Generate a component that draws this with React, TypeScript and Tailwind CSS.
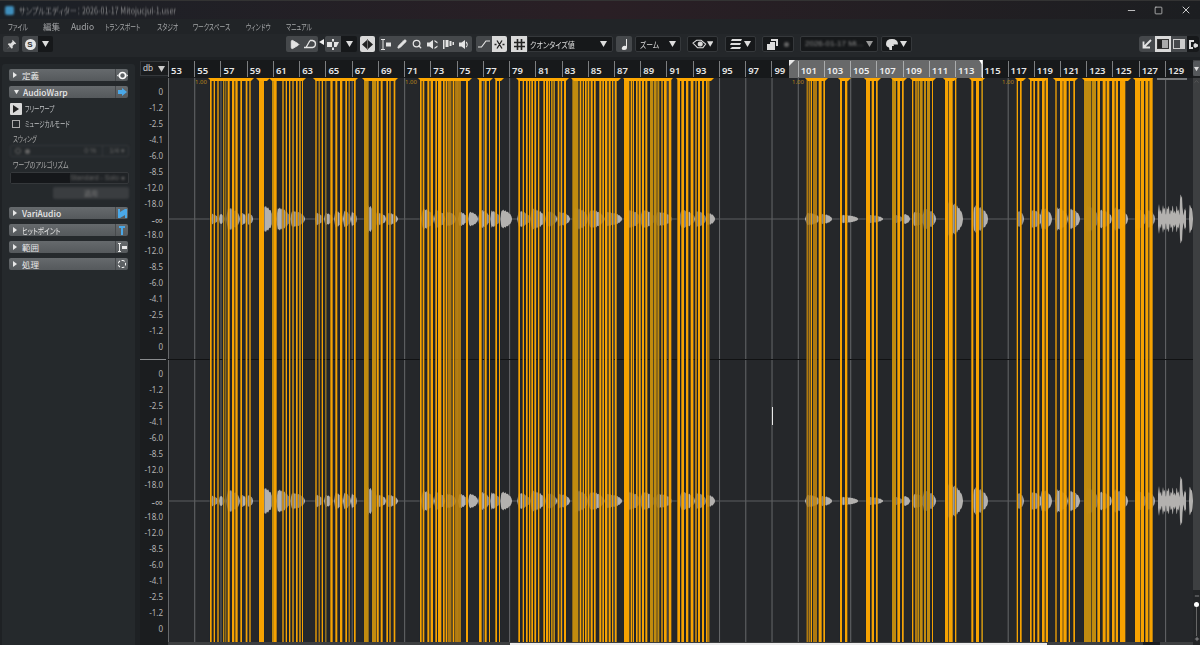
import type { ReactNode } from "react";
import { Minus, Plus, X, Square, Pencil, Search, Play, ChevronUp } from "lucide-react";

const JP = "font-['Noto_Sans_CJK_JP','Noto_Sans',sans-serif]";
// the kana in the shot are set much narrower than Noto's
const NARROW = "inline-block origin-left scale-x-[.68] whitespace-nowrap";

// [start, end, dim] as read off the 3x crops
const scan = (x0: number, list: number[][]) =>
  list.map(([a, b, d]) => ({ x: x0 + a / 3, w: (b - a) / 3, dim: !!d }));

const bars = [
  ...scan(190, [
    [60, 65], [71, 75], [82, 86], [99, 103, 1], [106, 109, 1], [113, 119], [126, 133], [136, 143], [151, 156], [167, 172], [178, 182],
    [207, 222], [246, 252, 1], [252, 260], [277, 281], [287, 291], [297, 301], [307, 311], [318, 323], [328, 332], [336, 339],
    [376, 380], [386, 389], [395, 399], [406, 409, 1], [421, 428], [436, 442], [450, 457], [466, 471], [476, 479], [492, 497],
    [522, 536, 1], [546, 558, 1], [560, 566], [572, 578], [589, 594], [598, 602], [611, 616], [690, 695], [698, 703], [712, 718], [722, 729], [736, 741], [744, 750],
  ]),
  ...scan(440, [
    [0, 4], [9, 14], [17, 22], [25, 29], [31, 34], [38, 43], [46, 50], [52, 56], [58, 62], [78, 84],
    [117, 125], [134, 140], [147, 150], [166, 171], [177, 180],
    [235, 240], [248, 252], [258, 263], [267, 271], [274, 279], [283, 288], [294, 298],
    [310, 315], [318, 324], [326, 330], [333, 338, 1], [340, 345, 1], [353, 358], [362, 366], [372, 378],
    [397, 415, 1], [419, 424], [428, 432], [435, 440], [443, 448], [452, 458], [462, 467], [478, 484], [487, 492], [495, 502], [506, 512], [516, 520], [525, 530],
    [552, 568], [572, 577], [579, 582], [588, 593], [596, 602], [606, 612], [616, 622], [630, 640, 1], [642, 650, 1], [652, 658, 1], [664, 668], [672, 680], [686, 694],
    [712, 720], [724, 732], [738, 745], [752, 760], [766, 770], [774, 780], [786, 792], [798, 803], [805, 808],
  ]),
  ...scan(790, [
    [50, 53], [56, 59], [62, 66], [70, 74], [76, 80], [86, 95], [100, 105],
    [150, 156], [165, 172], [228, 240], [245, 252], [258, 263],
    [306, 318, 1], [322, 330], [336, 341], [366, 370], [376, 380], [382, 387, 1], [389, 398, 1], [402, 408, 1], [411, 420, 1], [426, 429],
    [465, 475], [477, 488], [495, 499], [544, 550], [558, 567], [574, 579, 1],
    [680, 684], [690, 695], [720, 725], [730, 735], [742, 748], [756, 764], [767, 774],
    [796, 800], [810, 818], [820, 830], [836, 840], [850, 855],
    [882, 904, 1], [906, 918, 1], [922, 930], [938, 947], [950, 958], [966, 974], [977, 984], [990, 1006],
    [1035, 1050], [1052, 1062], [1066, 1075], [1078, 1088],
  ]),
];

const caps = [
  [208, 254], [256, 270], [269, 306], [313, 358], [362, 398], [418, 472], [477, 493], [494, 504], [516, 569], [571, 621], [623, 673], [676, 714],
  [805, 828], [838, 851], [864, 881], [891, 907], [910, 936], [943, 957], [969, 985], [1015, 1026], [1028, 1048], [1053, 1078], [1082, 1131], [1133, 1153],
];

// start, end, amplitude, noise
const notes = [
  [211, 218, 5], [219, 225, 5], [226, 240, 11], [240, 247, 6], [247, 253, 6], [262, 273, 13], [276, 290, 11], [290, 305, 8],
  [315, 323, 6], [324, 333, 6], [334, 343, 8], [343, 351, 8], [351, 357, 7], [366, 378, 13], [378, 386, 6], [386, 398, 6],
  [421, 434, 10], [434, 445, 9], [446, 456, 7], [458, 467, 7], [468, 478, 7], [478, 490, 9], [490, 500, 8], [500, 512, 9],
  [517, 530, 8], [530, 545, 10], [545, 557, 8], [557, 570, 7], [573, 588, 11], [588, 604, 9], [604, 622, 7],
  [627, 640, 9], [640, 655, 9], [655, 672, 7], [679, 695, 9], [695, 706, 8], [706, 715, 6],
  [805, 820, 6], [820, 832, 5], [840, 858, 4], [866, 883, 4], [892, 903, 4], [903, 910, 5],
  [912, 925, 7], [922, 936, 10], [945, 963, 17], [972, 988, 13], [1017, 1024, 8],
  [1030, 1042, 9], [1040, 1052, 11], [1055, 1068, 11], [1068, 1080, 10], [1085, 1098, 13], [1098, 1112, 9], [1112, 1128, 11], [1135, 1146, 10], [1146, 1155, 9],
  [1158, 1170, 15, 1], [1170, 1186, 14, 1], [1189, 1193, 14],
];

function blobPath(s: number, e: number, amp: number, noisy: number, cy: number) {
  const up: string[] = [];
  const down: string[] = [];
  for (let x = s; x <= e; x += 0.5) {
    const t = (x - s) / (e - s);
    const shape = Math.min(1, t / 0.14) * Math.sqrt(Math.max(0, 1 - t * t));
    const jitter = noisy ? 0.62 + 0.38 * Math.sin(x * 2.3) * Math.cos(x * 0.9) + (Math.abs(x - 1181) < 1.2 ? 0.9 : 0) : 1 + 0.08 * Math.sin(x * 2.7);
    const a = Math.max(0.6, amp * (noisy ? jitter : shape * jitter));
    up.push(`${x},${cy - a}`);
    down.unshift(`${x},${cy + a}`);
  }
  return `M${up.join("L")}L${down.join("L")}Z`;
}

const dbLabels = ["0", "-1.2", "-2.5", "-4.1", "-6.0", "-8.5", "-12.0", "-18.0", "-∞", "-18.0", "-12.0", "-8.5", "-6.0", "-4.1", "-2.5", "-1.2", "0"];
const ticks = Array.from({ length: 39 }, (_, i) => 53 + i * 2);

function Caret({ className = "" }: { className?: string }) {
  return (
    <svg width="7" height="6" viewBox="0 0 7 6" className={className}>
      <path d="M0 0h7L3.5 6z" fill="currentColor" />
    </svg>
  );
}

function Gray({ w, children, active }: { w: string; children?: ReactNode; active?: boolean }) {
  return <div className={`${w} h-4 flex items-center justify-center shrink-0 ${active ? "bg-[#d9d9d9] text-[#222]" : "bg-[#45484b] text-[#e4e4e4]"}`}>{children}</div>;
}

function Dark({ w, children }: { w: string; children?: ReactNode }) {
  return <div className={`${w} h-4 flex items-center justify-between px-[4px] shrink-0 bg-[#16181a] border border-[#35383b] rounded-[2px] text-[#ddd]`}>{children}</div>;
}

function SpeakerIcon({ cut }: { cut?: boolean }) {
  return (
    <svg width="11" height="11" viewBox="0 0 11 11" fill="currentColor">
      <path d="M0 3.5h2.5L6 1v9L2.5 7.5H0z" />
      {cut ? <path d="M7.5 2.5l3 2V3l-3-2zM7.5 8.5l3-2V8l-3 2z" /> : <path d="M7.5 2.5q2.5 3 0 6l-.7-.7q1.8-2.3 0-4.6z" />}
    </svg>
  );
}

function Toolbar() {
  return (
    <div className="h-[23px] bg-[#24272a] flex items-start pt-[2px] pl-[3px] shrink-0">
      <div className="w-4 h-4 bg-[#3d4043] rounded-[2px] flex items-center justify-center text-[#ddd]">
        <svg width="11" height="11" viewBox="0 0 11 11" fill="currentColor"><path d="M6.5.8l3.7 3.7-1 .7-.7-.2-1.9 1.900.2 1.800-1 1-2-2L.8 10.200l3-3-2-2 1-1 1.800.2 1.900-1.900-.2-.7z" /></svg>
      </div>
      <div className="ml-[3px] flex rounded-[2px] overflow-hidden">
        <Gray w="w-4">
          <div className="w-[11px] h-[11px] rounded-full bg-[#e4e4e4] text-[#333] text-[8px] leading-[11px] font-bold text-center font-['Liberation_Sans',sans-serif]">S</div>
        </Gray>
        <div className="w-[15px] h-4 bg-[#16181a] text-[#ddd] flex items-center justify-center"><Caret /></div>
      </div>
      <div className="ml-[233px] flex rounded-[2px] overflow-hidden">
        <Gray w="w-4"><Play size={11} fill="currentColor" /></Gray>
        <Gray w="w-4">
          <svg width="14" height="10" viewBox="0 0 14 10" fill="none" stroke="currentColor" strokeWidth="1.3"><path d="M1 8.5h8.500q3-.5 3-3.500t-3-3.500H7M7 1.500L3 8.500" /></svg>
        </Gray>
      </div>
      <svg width="5" height="6" viewBox="0 0 5 6" className="ml-[1px] mt-[3px] text-[#eee]"><path d="M5 0v6L0 3z" fill="currentColor" /></svg>
      <div className="ml-[1px] flex rounded-[2px] overflow-hidden">
        <Gray w="w-4">
          <svg width="12" height="11" viewBox="0 0 12 11" fill="currentColor"><path d="M5 0h2v2.500H5zM0 3h5v5H0zM7 3h5L9.500 8H7zM5 8.500h2V11H5z" /></svg>
        </Gray>
        <div className="w-4 h-4 bg-[#16181a] text-[#ddd] flex items-center justify-center"><Caret /></div>
      </div>
      <div className="ml-[3px] rounded-[2px] overflow-hidden">
        <Gray w="w-[15px]" active>
          <svg width="11" height="11" viewBox="0 0 11 11" fill="currentColor"><path d="M5 1v9L0 5.500zM6 1l5 4.500L6 10zM5.200 0h.6v11h-.6z" /></svg>
        </Gray>
      </div>
      <div className="ml-[4px] w-[93px] h-4 bg-[#45484b] rounded-[2px] flex items-center justify-between px-[2px] text-[#e4e4e4]">
        <svg width="11" height="11" viewBox="0 0 11 11" fill="currentColor"><path d="M0 0h4v1H2.500v9H4v1H0v-1h1.500V1H0zM5 3.500h5v4H5z" /></svg>
        <Pencil size={10} fill="currentColor" />
        <Search size={10} strokeWidth={3} />
        <SpeakerIcon cut />
        <svg width="11" height="11" viewBox="0 0 11 11" fill="currentColor"><path d="M0 1h1.500v9H0zM2.500 1h3v7h-3zM6.500 2h2v5h-2zM9.500 3H11v3H9.500z" /></svg>
        <SpeakerIcon />
      </div>
      <div className="ml-[4px] flex rounded-[2px] overflow-hidden">
        <Gray w="w-4">
          <svg width="12" height="10" viewBox="0 0 12 10" fill="none" stroke="currentColor" strokeWidth="1.2"><path d="M0 8h3.500L8 2h4" /></svg>
        </Gray>
        <Gray w="w-[15px]" active>
          <svg width="11" height="11" viewBox="0 0 11 11" fill="none" stroke="currentColor" strokeWidth="1.3"><path d="M3 1.500l5 8M8 1.500l-5 8M.5 5.500h2M8.500 5.500h2" /></svg>
        </Gray>
      </div>
      <div className="ml-[4px] flex w-[102px]">
        <Gray w="w-4" active>
          <svg width="11" height="11" viewBox="0 0 11 11" fill="none" stroke="currentColor" strokeWidth="1.6"><path d="M3.500 0v11M7.500 0v11M0 3.500h11M0 7.500h11" /></svg>
        </Gray>
        <div className="flex-1 h-4 bg-[#16181a] border border-[#35383b] rounded-r-[2px] flex items-center justify-between pl-[2px] pr-[5px] text-[#ddd]">
          <span className="text-[8.5px] leading-none inline-block origin-left scale-x-[.83] whitespace-nowrap">クオンタイズ値</span>
          <Caret />
        </div>
      </div>
      <div className="ml-[3px] w-4 h-4 bg-[#45484b] rounded-[2px] flex items-center justify-center text-[#e8e8e8]">
        <svg width="9" height="11" viewBox="0 0 9 11" fill="currentColor"><path d="M6 0h1v8.500Q7 11 4 11T2 8.500 6 7z" /></svg>
      </div>
      <div className="ml-[3px]">
        <Dark w="w-[46px]">
          <span className="text-[8.5px] leading-none inline-block origin-left scale-x-[.8] whitespace-nowrap">ズーム</span>
          <Caret />
        </Dark>
      </div>
      <div className="ml-[6px]">
        <Dark w="w-[31px]">
          <svg width="16" height="10" viewBox="0 0 16 10" fill="none" stroke="currentColor" strokeWidth="1.1"><path d="M1 4l4-3h5l5 4-3 4H6z" /><circle cx="9" cy="5" r="2.2" fill="currentColor" /></svg>
          <Caret />
        </Dark>
      </div>
      <div className="ml-[7px]">
        <Dark w="w-[31px]">
          <svg width="12" height="10" viewBox="0 0 12 10" fill="currentColor"><path d="M2 0h10L11 2H1zM1 4h10L10 6H0zM2 8h9l-1 2H0z" /></svg>
          <Caret />
        </Dark>
      </div>
      <div className="ml-[6px]">
        <Dark w="w-8">
          <svg width="11" height="11" viewBox="0 0 11 11" fill="currentColor"><path d="M3 3h5v8H0V5h3zM4 0h7v7H9V2H4z" /></svg>
          <div className="w-[5px] h-[5px] rounded-full bg-[#666] blur-[1px]" />
        </Dark>
      </div>
      <div className="ml-[6px]">
        <Dark w="w-[78px]">
          <span className="font-['Liberation_Sans',sans-serif] text-[8px] leading-none text-[#888] blur-[1.2px] whitespace-nowrap">2026-01-17 Mi...</span>
          <Caret className="text-[#999]" />
        </Dark>
      </div>
      <div className="ml-[3px]">
        <Dark w="w-[31px]">
          <svg width="12" height="11" viewBox="0 0 12 11" fill="currentColor"><path d="M6 0q6 0 6 5.500H7.500L8 7H6v4H3.500L3 8.500Q0 7.500 0 5 0 0 6 0z" /></svg>
          <Caret />
        </Dark>
      </div>
      <div className="ml-[227px] flex rounded-[3px] overflow-hidden">
        <Gray w="w-4">
          <svg width="10" height="10" viewBox="0 0 10 10" fill="none" stroke="currentColor" strokeWidth="1.8"><path d="M9 1L2 8M1.500 2.500V8.500H8" /></svg>
        </Gray>
        <Gray w="w-4" active>
          <div className="w-[12px] h-[10px] border border-[#333] bg-[#aaa] flex"><div className="w-[4px] bg-[#222]" /></div>
        </Gray>
        <Gray w="w-4">
          <div className="w-[12px] h-[10px] border border-[#ccc] flex justify-end"><div className="w-[4px] bg-[#ccc]" /></div>
        </Gray>
        <div className="w-[12px] h-4 bg-[#16181a] text-[#ddd] flex items-center justify-center">
          <svg width="9" height="9" viewBox="0 0 9 9" fill="currentColor"><path d="M0 0h5v2H2v5h2v2H0zM6 3l3 1.500v2L6 8 4.500 6.500v-2z" /></svg>
        </div>
      </div>
    </div>
  );
}

function SectionRow({ label, icon, open, bold, narrow }: { label: string; icon: ReactNode; open?: boolean; bold?: boolean; narrow?: boolean }) {
  return (
    <div className="h-3 mx-[7px] rounded-[2px] bg-gradient-to-b from-[#666a6d] to-[#55595c] flex items-center pl-[4px] text-[#e8e8e8]">
      {open ? <Caret className="scale-75" /> : <svg width="4" height="6" viewBox="0 0 4 6" className="mr-[2px]"><path d="M0 0l4 3-4 3z" fill="currentColor" /></svg>}
      <span className={`ml-[3px] text-[8.5px] leading-none ${bold ? "font-medium" : ""} ${narrow ? "inline-block origin-left scale-x-[.76] whitespace-nowrap" : ""}`}>{label}</span>
      <div className="ml-auto w-[13px] h-3 flex items-center justify-center border-l border-[#46494c]">{icon}</div>
    </div>
  );
}

function SidePanel() {
  return (
    <aside className="w-[137px] shrink-0 px-[2px] pt-[4px]">
      <div className="h-full bg-[#25292c] rounded-t-[3px] pt-[5px]">
        <SectionRow
          label="定義"
          icon={
            <svg width="11" height="9" viewBox="0 0 11 9" fill="none" stroke="#fff" strokeWidth="1.5">
              <circle cx="5.5" cy="4.5" r="3" />
              <path d="M0 4.500l1.500-1.500v3zM11 4.500l-1.500-1.500v3z" fill="#fff" stroke="none" />
            </svg>
          }
        />
        <div className="h-[5px]" />
        <SectionRow
          label="AudioWarp"
          open
          bold
          icon={<svg width="9" height="8" viewBox="0 0 9 8" fill="#4aa8e8"><path d="M0 2h4V0l5 4-5 4V6H0z" /></svg>}
        />
        <div className="pl-[8px] pr-[6px] text-[#c4c6c8]">
          <div className="mt-[5px] h-3 flex items-center">
            <div className="w-3 h-3 bg-[#d9d9d9] rounded-[1px] flex items-center justify-center text-[#222]">
              <svg width="6" height="8" viewBox="0 0 6 8" fill="currentColor"><path d="M0 0l6 4-6 4z" /></svg>
            </div>
            <span className={`ml-[3px] text-[8px] leading-none ${NARROW}`}>フリーワープ</span>
          </div>
          <div className="mt-[5px] h-2 flex items-center">
            <div className="ml-[2px] w-2 h-2 border border-[#aaa]" />
            <span className={`ml-[5px] text-[8px] leading-none ${NARROW}`}>ミュージカルモード</span>
          </div>
          <div className="mt-[7px] h-2 text-[8px] leading-[8px] pl-[3px] text-[#aaa]">
            <span className={NARROW}>スウィング</span>
          </div>
          <div className="mt-[2px] h-3 border border-[#35383b] rounded-[2px] flex items-center pl-[4px] pr-[3px] text-[#666] blur-[0.8px] text-[7px] font-['Liberation_Sans',sans-serif]">
            <div className="w-[6px] h-[6px] border border-[#666] rounded-full" />
            <div className="ml-[4px] w-[5px] h-[5px] rounded-full bg-[#666]" />
            <div className="ml-auto">0 %</div>
            <div className="ml-[6px] pl-[6px] border-l border-[#35383b]">1/4 ▾</div>
          </div>
          <div className="mt-[4px] h-2 text-[8px] leading-[8px] pl-[3px] text-[#aaa]">
            <span className="inline-block origin-left scale-x-[.76] whitespace-nowrap">ワープのアルゴリズム</span>
          </div>
          <div className="mt-[3px] h-3 border border-[#35383b] rounded-[2px] flex items-center bg-[#202326] text-[#666] text-[7px] font-['Liberation_Sans',sans-serif]">
            <div className="w-[60px] h-full bg-[#15171a]" />
            <div className="ml-auto pr-[3px] blur-[1px] whitespace-nowrap">Standard - Solo ●</div>
          </div>
          <div className="mt-[3px] ml-[43px] h-3 bg-[#3a3d40] rounded-[2px] flex items-center justify-center text-[7px] text-[#777] blur-[1px]">適用</div>
        </div>
        <div className="h-2" />
        <div className="flex flex-col gap-[5px]">
          <SectionRow
            label="VariAudio"
            bold
            icon={<svg width="9" height="9" viewBox="0 0 9 9" fill="#4aa8e8"><path d="M0 0h2v3l5-3h2v9H7V6L2 9H0z" /></svg>}
          />
          <SectionRow
            label="ヒットポイント"
            narrow
            icon={<svg width="6" height="9" viewBox="0 0 6 9" fill="#4aa8e8"><path d="M0 0h6v2H4v7H2V2H0z" /></svg>}
          />
          <SectionRow
            label="範囲"
            icon={<svg width="9" height="9" viewBox="0 0 9 9" fill="#e8e8e8"><path d="M0 0h3v1H2v7h1v1H0V8h1V1H0zM4 3h5v3H4z" /></svg>}
          />
          <SectionRow
            label="処理"
            icon={<div className="w-[8px] h-[8px] rounded-full border border-dashed border-white" />}
          />
        </div>
      </div>
    </aside>
  );
}

function DbColumn() {
  const rows = (key: string) =>
    dbLabels.map((l, i) => (
      <div key={key + i} className={`h-[15.94px] flex items-center justify-end pr-[5px] text-[#b4b4b4] font-['Noto_Sans',sans-serif] leading-none ${l === "-∞" ? "text-[11px]" : "text-[8px]"}`}>
        {l}
      </div>
    ));
  return (
    <div className="w-[31px] shrink-0 flex flex-col">
      <div className="h-[18px] pl-[3px] pt-[1px] shrink-0">
        <div className="h-[15px] bg-[#1a1c1e] border border-[#35383b] border-r-0 flex items-center justify-between pl-[2px] pr-[3px] text-[#ccc] font-['Liberation_Sans',sans-serif] text-[9px]">
          db <Caret />
        </div>
      </div>
      <div className="flex-1 ml-[3px] bg-[#1b1d1f] pt-[6px]">
        {rows("a")}
        <div className="h-[11px] pt-[4px] pr-[2px]">
          <div className="w-full h-[1.5px] bg-[#8a8c8e]" />
        </div>
        {rows("b")}
      </div>
    </div>
  );
}

function Ruler() {
  return (
    <div className="h-[18px] shrink-0 bg-[#17191b] flex relative overflow-hidden">
      {ticks.map((n) => (
        <div key={n} className="w-[26.24px] shrink-0 border-l border-[#7c7e80] my-[1px] flex items-end">
          <span className="pl-[2px] text-[9.5px] leading-[12px] font-semibold text-[#e6e6e6] font-['Noto_Sans',sans-serif]">{n}</span>
        </div>
      ))}
      <div className="absolute left-[621px] top-0 w-[194px] h-full bg-white/35">
        <svg width="194" height="18" viewBox="0 0 194 18" className="block">
          <path d="M0 0h6L0 6z" fill="#e8e8e8" />
          <path d="M190 0h4v6z" fill="#fff" />
          <path d="M193 0h1v18h-1z" fill="#ddd" />
        </svg>
      </div>
    </div>
  );
}

function Waveform() {
  return (
    <svg viewBox="168 78 1025 564" width="1025" height="564" className="block shrink-0 bg-[#25272a]">
      {ticks.map((n, i) => (
        <rect key={n} x={168 + i * 26.24} y="78" width="1" height="564" fill="#66686a" />
      ))}
      <rect x="168" y="359" width="1025" height="1" fill="#111213" />
      {[219, 501].map((cy) => (
        <g key={cy}>
          <rect x="168" y={cy - 0.5} width="1025" height="1" fill="#5c5e60" />
          {notes.map(([s, e, a, n], i) => (
            <path key={i} d={blobPath(s, e, a, n || 0, cy)} fill="#b3b1af" />
          ))}
        </g>
      ))}
      {bars.map((b, i) => (
        <rect key={"e" + i} x={b.x - 0.6} y="78" width={b.w + 1.2} height="564" fill="#1b2431" opacity="0.6" />
      ))}
      {bars.map((b, i) => (
        <rect key={i} x={b.x} y="78" width={b.w} height="564" fill={b.dim ? "#c8900f" : "#ffa800"} opacity="0.96" />
      ))}
      {caps.map(([a, b], i) => (
        <path key={i} d={`M${a} 78H${b}L${b - 3} 81H${a + 3}Z`} fill="#ffa800" />
      ))}
      <path d="M1157 78H1187V80H1157Z" fill="#77797b" />
      {[195, 405, 792, 1002].map((x) => (
        <text key={x} x={x} y="84" fontSize="6" fill="#b8861a" fontFamily="Noto Sans, sans-serif">1.00</text>
      ))}
      <rect x="772" y="407" width="1" height="18" fill="#e8e8e8" />
    </svg>
  );
}

function BottomScroll() {
  return (
    <div className="h-[3px] shrink-0 bg-[#3d3f41] flex">
      <div className="w-[342px]" />
      <div className="w-[537px] bg-[#ececec] mt-[1px]" />
      <div className="w-[96px]" />
      <div className="w-[17px] bg-[#1c1e20]" />
    </div>
  );
}

export default function App() {
  return (
    <div className={`w-[1200px] h-[645px] overflow-hidden flex flex-col bg-[#1e2124] ${JP} [font-feature-settings:'palt']`}>
      <div className="h-[19px] shrink-0 flex items-center bg-gradient-to-r from-[#1b2026] via-[#2a1f25] to-[#1c1e21] border-t border-[#333]">
        <div className="ml-[5px] w-[9px] h-[9px] rounded-[2px] bg-[#3f8fbd] blur-[1px]" />
        <span className="ml-[5px] text-[8.5px] leading-none text-[#8a8a8c] blur-[0.9px] whitespace-nowrap inline-block origin-left scale-x-[.84]">サンプルエディター： 2026-01-17 Mitojucjul-1.user</span>
        <div className="ml-auto flex items-center text-[#ccc]">
          <Minus size={11} className="mr-[17px]" />
          <Square size={9} className="mr-[17px]" strokeWidth={2} />
          <X size={12} className="mr-[8px]" />
        </div>
      </div>
      <div className="h-[15px] shrink-0 flex items-center bg-[#212427] text-[8.5px] leading-none text-[#a4a6a8] whitespace-nowrap">
        <div className="ml-[8px] w-[35px] blur-[0.7px]"><span className={NARROW}>ファイル</span></div>
        <div className="w-[28px] blur-[0.7px]">編集</div>
        <div className="w-[34px] blur-[0.7px]">Audio</div>
        <div className="w-[52px] blur-[0.7px]"><span className={NARROW}>トランスポート</span></div>
        <div className="w-[36px] blur-[0.7px]"><span className={NARROW}>スタジオ</span></div>
        <div className="w-[53px]"><span className={NARROW}>ワークスペース</span></div>
        <div className="w-[40px]"><span className={NARROW}>ウィンドウ</span></div>
        <div><span className={NARROW}>マニュアル</span></div>
      </div>
      <Toolbar />
      <div className="h-[3px] shrink-0 bg-[#1e2124]" />
      <div className="flex-1 flex min-h-0">
        <SidePanel />
        <DbColumn />
        <div className="w-[1025px] shrink-0 flex flex-col">
          <Ruler />
          <Waveform />
          <BottomScroll />
        </div>
        <div className="w-[7px] shrink-0 flex flex-col bg-[#3d3f41] text-[#ddd]">
          <div className="h-[15px] mt-[1px] bg-[#55585b] rounded-l-[2px] flex items-center justify-center"><Caret className="scale-75" /></div>
          <div className="h-[2px] bg-[#1c1e20]" />
          <div className="flex items-center justify-center text-[#666]"><ChevronUp size={7} /></div>
          <div className="flex-1" />
          <div className="h-[55px] bg-[#232527] flex flex-col items-center">
            <Minus size={6} className="mt-[3px]" />
            <div className="w-[5px] h-[5px] rounded-full bg-white mt-[3px] shrink-0" />
            <div className="w-[1px] flex-1 bg-[#666]" />
            <Plus size={6} className="mb-[3px]" />
          </div>
        </div>
      </div>
    </div>
  );
}
